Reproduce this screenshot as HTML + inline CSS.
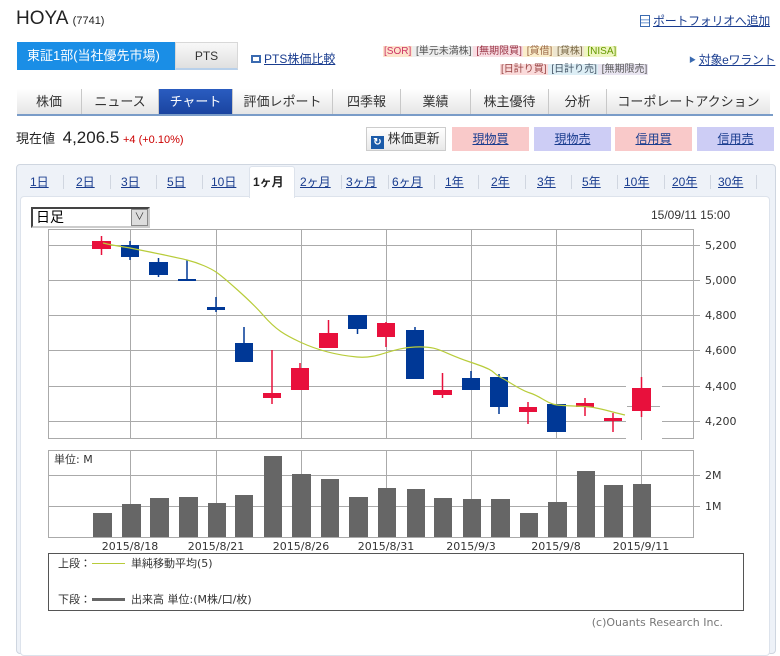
<!DOCTYPE html>
<html><head><meta charset="utf-8">
<style>
*{margin:0;padding:0;box-sizing:border-box}
body{width:780px;height:644px;background:#fff;position:relative;overflow:hidden;font-family:"Liberation Sans","Noto Sans CJK JP",sans-serif;color:#333}
.a{position:absolute;white-space:nowrap}
a,.u{color:#1a3d8f;text-decoration:underline}
.tag{font-size:10px;padding:0 1px}
.nav{position:absolute;top:89px;height:25px;font-size:13px;text-align:center;line-height:25px;background:linear-gradient(#fff,#e6e6e6);color:#333;border-right:1px solid #c8c8c8}
.btn{position:absolute;top:127px;height:24px;width:77px;font-size:12px;text-align:center;line-height:24px;color:#1a3d8f;text-decoration:underline}
.pt{position:absolute;top:173px;font-size:12px;color:#1a3d8f;text-decoration:underline}
.sep{position:absolute;top:175px;width:1px;height:14px;background:#d0d6e0}
</style></head><body>
<div class="a" style="left:16px;top:8px;font-size:19px;color:#222">HOYA <span style="font-size:11px">(7741)</span></div>
<div class="a" style="left:640px;top:12px;font-size:12px;letter-spacing:-0.3px"><span style="display:inline-block;width:10px;height:12px;border:1px solid #3a6ab0;background:linear-gradient(#fff 30%,#9bb8e0 30%,#9bb8e0 45%,#fff 45%,#fff 60%,#9bb8e0 60%,#9bb8e0 75%,#fff 75%);vertical-align:-2px;margin-right:3px"></span><a>ポートフォリオへ追加</a></div>
<div class="a" style="left:17px;top:42px;width:158px;height:28px;background:#1a8ee6;color:#fff;font-size:13px;line-height:28px;padding-left:10px">東証1部(当社優先市場)</div>
<div class="a" style="left:175px;top:42px;width:63px;height:28px;background:linear-gradient(#f8f8f8,#e0e0e0);border:1px solid #d8d8d8;border-bottom:2px solid #b8d0ea;font-size:12px;line-height:26px;text-align:center">PTS</div>
<div class="a" style="left:251px;top:50px;font-size:12px"><span style="display:inline-block;width:10px;height:8px;border:2px solid #3a6ab0;margin-right:3px;vertical-align:0"></span><a>PTS株価比較</a></div>
<div class="a" style="left:383px;top:42px;font-size:10px">
<span class="tag" style="background:#fde3cc;color:#c36">[SOR]</span><span class="tag" style="background:#eee;color:#555"> [単元未満株]</span><span class="tag" style="background:#f9dde3;color:#934"> [無期限買]</span><span class="tag" style="background:#faeecb;color:#964"> [貸借]</span><span class="tag" style="background:#eee6d0;color:#764"> [貸株]</span><span class="tag" style="background:#eef5c0;color:#690"> [NISA]</span></div>
<div class="a" style="left:500px;top:60px;font-size:10px">
<span class="tag" style="background:#fadada;color:#944">[日計り買]</span><span class="tag" style="background:#ddeef5;color:#456"> [日計り売]</span><span class="tag" style="background:#e8e4f0;color:#555"> [無期限売]</span></div>
<div class="a" style="left:689px;top:51px;font-size:12px;letter-spacing:-0.3px"><span style="font-size:7px;color:#3a6ab0;vertical-align:2px">▶</span> <a>対象eワラント</a></div>

<div class="nav" style="left:17px;width:65px">株価</div>
<div class="nav" style="left:82px;width:77px">ニュース</div>
<div class="nav" style="left:159px;width:74px;background:linear-gradient(#2a5cc0,#1a44a0);color:#fff">チャート</div>
<div class="nav" style="left:233px;width:100px">評価レポート</div>
<div class="nav" style="left:333px;width:68px">四季報</div>
<div class="nav" style="left:401px;width:70px">業績</div>
<div class="nav" style="left:471px;width:78px">株主優待</div>
<div class="nav" style="left:549px;width:58px">分析</div>
<div class="nav" style="left:607px;width:163px;border-right:none">コーポレートアクション</div>
<div class="a" style="left:17px;top:114px;width:756px;height:2px;background:#7a9cc8"></div>

<div class="a" style="left:16px;top:128px;font-size:13px;color:#222">現在値 <span style="font-size:17px;margin-left:4px">4,206.5</span> <span style="font-size:11px;color:#c00">+4 (+0.10%)</span></div>
<div class="a" style="left:366px;top:127px;width:80px;height:24px;border:1px solid #ccc;background:linear-gradient(#fff,#e8e8e8);font-size:13px;line-height:22px;padding-left:4px"><span style="display:inline-block;width:13px;height:13px;background:#1a5aa8;color:#fff;font-size:10px;line-height:13px;text-align:center;vertical-align:-2px;font-weight:bold">↻</span> 株価更新</div>
<div class="btn" style="left:452px;background:#f9c9c9">現物買</div>
<div class="btn" style="left:534px;background:#cdcdf5">現物売</div>
<div class="btn" style="left:615px;background:#f9c9c9">信用買</div>
<div class="btn" style="left:697px;background:#cdcdf5">信用売</div>

<div class="a" style="left:16px;top:164px;width:760px;height:490px;background:#eef2f8;border:1px solid #cfd6e0;border-radius:4px"></div>
<div class="a" style="left:20px;top:196px;width:750px;height:460px;background:#fff;border:1px solid #dde3ec;border-radius:4px"></div>
<div class="a" style="left:249px;top:166px;width:46px;height:32px;background:#fff;border:1px solid #dde3ec;border-bottom:none;border-radius:3px 3px 0 0"></div>
<span class="pt" style="left:30px">1日</span><span class="sep" style="left:63px"></span>
<span class="pt" style="left:76px">2日</span><span class="sep" style="left:110px"></span>
<span class="pt" style="left:121px">3日</span><span class="sep" style="left:156px"></span>
<span class="pt" style="left:167px">5日</span><span class="sep" style="left:202px"></span>
<span class="pt" style="left:211px">10日</span>
<span class="pt" style="left:253px;font-weight:bold;color:#222;text-decoration:none">1ヶ月</span>
<span class="pt" style="left:300px">2ヶ月</span><span class="sep" style="left:341px"></span>
<span class="pt" style="left:346px">3ヶ月</span><span class="sep" style="left:388px"></span>
<span class="pt" style="left:392px">6ヶ月</span><span class="sep" style="left:434px"></span>
<span class="pt" style="left:445px">1年</span><span class="sep" style="left:478px"></span>
<span class="pt" style="left:491px">2年</span><span class="sep" style="left:525px"></span>
<span class="pt" style="left:537px">3年</span><span class="sep" style="left:571px"></span>
<span class="pt" style="left:582px">5年</span><span class="sep" style="left:617px"></span>
<span class="pt" style="left:624px">10年</span><span class="sep" style="left:664px"></span>
<span class="pt" style="left:672px">20年</span><span class="sep" style="left:710px"></span>
<span class="pt" style="left:718px">30年</span><span class="sep" style="left:756px"></span>

<div class="a" style="left:31px;top:207px;width:119px;height:21px;border:2px solid #444;border-right-color:#ccc;border-bottom-color:#ccc;font-size:14px;line-height:17px;padding-left:3px;color:#000">日足</div>
<div class="a" style="left:131px;top:209px;width:17px;height:17px;background:#ddd;border:1px solid #888;font-size:10px;text-align:center;line-height:15px">∨</div>
<div class="a" style="left:651px;top:208px;font-size:12px;color:#333">15/09/11 15:00</div>

<svg class="a" style="left:0;top:0" width="780" height="644" font-family="DejaVu Sans, Noto Sans CJK JP, sans-serif">
<g stroke="#aaa" stroke-width="1" fill="none">
<rect x="48.5" y="229.5" width="645" height="209"/>
<path d="M48 245.5H700M48 280.5H700M48 315.5H700M48 350.5H700M48 386.5H700M48 421.5H700"/>
<path d="M130.5 229V438M216.5 229V438M301.5 229V438M386.5 229V438M471.5 229V438M556.5 229V438M641.5 229V438"/>
<rect x="48.5" y="450.5" width="645" height="87"/>
<path d="M48 475.5H700M48 506.5H700"/>
<path d="M130.5 450V537M216.5 450V537M301.5 450V537M386.5 450V537M471.5 450V537M556.5 450V537M641.5 450V537"/>
</g>
<rect x="626" y="378" width="36" height="64" fill="#fff"/>
<path d="M627 406.5H660M641.5 370V440" stroke="#aaa"/>
<g font-size="11" fill="#333">
<text x="705" y="249">5,200</text><text x="705" y="284">5,000</text><text x="705" y="319">4,800</text><text x="705" y="354">4,600</text><text x="705" y="390">4,400</text><text x="705" y="425">4,200</text>
<text x="705" y="479">2M</text><text x="705" y="510">1M</text>
<text x="54" y="463">単位: M</text>
<g text-anchor="middle"><text x="130" y="550">2015/8/18</text><text x="216" y="550">2015/8/21</text><text x="301" y="550">2015/8/26</text><text x="386" y="550">2015/8/31</text><text x="471" y="550">2015/9/3</text><text x="556" y="550">2015/9/8</text><text x="641" y="550">2015/9/11</text></g>
</g>
<g fill="#666">
<rect x="93" y="513" width="19" height="24"/><rect x="122" y="504" width="19" height="33"/><rect x="150" y="498" width="19" height="39"/><rect x="179" y="497" width="19" height="40"/><rect x="208" y="503" width="18" height="34"/><rect x="235" y="495" width="18" height="42"/><rect x="264" y="456" width="18" height="81"/><rect x="292" y="474" width="19" height="63"/><rect x="321" y="479" width="18" height="58"/><rect x="349" y="497" width="19" height="40"/><rect x="378" y="488" width="18" height="49"/><rect x="407" y="489" width="18" height="48"/><rect x="434" y="498" width="18" height="39"/><rect x="463" y="499" width="18" height="38"/><rect x="491" y="499" width="19" height="38"/><rect x="520" y="513" width="18" height="24"/><rect x="548" y="502" width="19" height="35"/><rect x="577" y="471" width="18" height="66"/><rect x="604" y="485" width="19" height="52"/><rect x="633" y="484" width="18" height="53"/>
</g>
<g stroke="#e8103c" stroke-width="1.5">
<path d="M101.5 236V255M272 350V404M300 363V390M328.5 320V348M386 322V347M442.5 373V398M528 402V424M585 398V416M613 413V432M641.5 377V417"/>
</g>
<g fill="#e8103c">
<rect x="92" y="241" width="19" height="8"/><rect x="263" y="393" width="18" height="5"/><rect x="291" y="368" width="18" height="22"/><rect x="319" y="333" width="19" height="15"/><rect x="377" y="323" width="18" height="14"/><rect x="433" y="390" width="19" height="5"/><rect x="519" y="407" width="18" height="5"/><rect x="576" y="403" width="18" height="4"/><rect x="604" y="418" width="18" height="3"/><rect x="632" y="388" width="19" height="23"/>
</g>
<g stroke="#003896" stroke-width="1.5">
<path d="M130 241V260M158.5 258V277M187 260V280M216 297V312M244 327V362M357.5 315V334M415 327V379M471 371V390M499 374V414M556.5 404V432"/>
</g>
<g fill="#003896">
<rect x="121" y="245" width="18" height="12"/><rect x="149" y="262" width="19" height="13"/><rect x="178" y="279" width="18" height="2"/><rect x="207" y="307" width="18" height="3"/><rect x="235" y="343" width="18" height="19"/><rect x="348" y="315" width="19" height="14"/><rect x="406" y="330" width="18" height="49"/><rect x="462" y="378" width="18" height="12"/><rect x="490" y="377" width="18" height="30"/><rect x="547" y="404" width="19" height="28"/>
</g>
<path d="M103 243 C115 246 125 247 130 248 S175 257 187 260 S210 268 216 272 S250 300 263 315 S285 335 300 342 S335 355 357 357 S390 348 415 347 S440 352 470 362 S490 372 500 377 S520 390 530 393 S548 404 557 405 S580 406 590 407 S615 413 625 415" fill="none" stroke="#b8cc3a" stroke-width="1.2"/>
<rect x="48.5" y="553.5" width="695" height="57" fill="none" stroke="#555" stroke-width="1"/>
<g font-size="11" fill="#333">
<text x="58" y="567">上段：</text><path d="M92 563.5H125" stroke="#b8cc3a"/><text x="131" y="567">単純移動平均(5)</text>
<text x="58" y="603">下段：</text><path d="M92 599.5H125" stroke="#666" stroke-width="3"/><text x="131" y="603">出来高 単位:(M株/口/枚)</text>
<text x="723" y="626" text-anchor="end" fill="#777" font-size="11">(c)Ouants Research Inc.</text>
</g>
</svg>
</body></html>
